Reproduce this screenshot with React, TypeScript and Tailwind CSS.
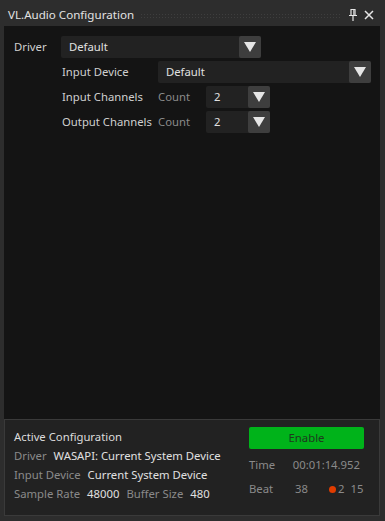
import React from 'react';

const font = { fontFamily: '"Noto Sans", "Open Sans", sans-serif' };

const Arrow = () => (
  <svg width="12" height="10" viewBox="0 0 12 10">
    <polygon points="0,0 12,0 6,10" fill="#e6e6e6" />
  </svg>
);

const Dropdown = ({ value, className }: { value: string; className: string }) => (
  <div className={`flex h-[22px] items-stretch rounded-[2px] bg-[#222222] ${className}`}>
    <span className="flex flex-1 items-center pl-2 text-[#e0e0e0]">{value}</span>
    <span className="flex w-[22px] items-center justify-center rounded-[2px] bg-[#3e3e3e]">
      <Arrow />
    </span>
  </div>
);

const App: React.FC = () => {
  return (
    <div
      className="flex h-[521px] w-[385px] flex-col bg-[#2d2d2d] text-[11.3px] text-[#cfcfcf]"
      style={font}
    >
      {/* title bar */}
      <div className="flex h-[26px] shrink-0 items-center pl-[8px] pr-[11px] pt-[4px]">
        <span className="text-[11.6px] text-[#e2e2e2]">VL.Audio Configuration</span>
        <div className="ml-[6px] mr-[8px] h-[5px] flex-1 bg-[radial-gradient(#3e3e3e_0.6px,transparent_0.8px)] bg-[length:3px_3px]" />
        <svg width="8" height="12" viewBox="0 0 8 12">
          <path d="M2 0.5h4v6H2z M0 6.5h8 M4 6.5v5.5" stroke="#e6e6e6" strokeWidth="1.2" fill="none" />
          <path d="M4.8 1v5" stroke="#e6e6e6" strokeWidth="1" />
        </svg>
        <svg width="10" height="10" viewBox="0 0 10 10" className="ml-[7px]">
          <path d="M1 1L9 9M9 1L1 9" stroke="#e6e6e6" strokeWidth="1.5" />
        </svg>
      </div>

      <div className="mb-[5px] ml-[4px] mr-[5px] flex flex-1 flex-col">
        {/* config */}
        <div className="flex flex-1 flex-col gap-[3px] bg-[#141414] pl-[10px] pt-[10px]">
          <div className="flex items-center">
            <span className="w-[47px]">Driver</span>
            <Dropdown value="Default" className="w-[200px]" />
          </div>
          <div className="flex items-center pl-[48px]">
            <span className="w-[96px]">Input Device</span>
            <Dropdown value="Default" className="w-[213px]" />
          </div>
          <div className="flex items-center pl-[48px]">
            <span className="w-[96px]">Input Channels</span>
            <span className="w-[48px] text-[#8a8a8a]">Count</span>
            <Dropdown value="2" className="w-[64px]" />
          </div>
          <div className="flex items-center pl-[48px]">
            <span className="w-[96px]">Output Channels</span>
            <span className="w-[48px] text-[#8a8a8a]">Count</span>
            <Dropdown value="2" className="w-[64px]" />
          </div>
        </div>

        {/* active configuration */}
        <div className="flex h-[97px] shrink-0 border border-[#3a3a3a] bg-[#222222] pl-[9px] pr-[15px] pt-[7px]">
          <div className="flex flex-1 flex-col leading-[19px]">
            <span className="text-[#dcdcdc]">Active Configuration</span>
            <div>
              <span className="text-[#8a8a8a]">Driver</span>
              <span className="ml-[7px] text-[#e0e0e0]">WASAPI: Current System Device</span>
            </div>
            <div>
              <span className="text-[#8a8a8a]">Input Device</span>
              <span className="ml-[7px] text-[#e0e0e0]">Current System Device</span>
            </div>
            <div>
              <span className="text-[#8a8a8a]">Sample Rate</span>
              <span className="ml-[7px] text-[#e0e0e0]">48000</span>
              <span className="ml-[7px] text-[#8a8a8a]">Buffer Size</span>
              <span className="ml-[7px] text-[#e0e0e0]">480</span>
            </div>
          </div>
          <div className="flex w-[115px] flex-col">
            <div className="flex h-[22px] items-center justify-center rounded-[2px] bg-[#00b31a] text-[#1e3a1e]">
              Enable
            </div>
            <div className="mt-[4px] flex h-[24px] items-center pr-[4px] text-[#8a8a8a]">
              <span className="w-[48px]">Time</span>
              <span className="flex-1 text-right">00:01:14.952</span>
            </div>
            <div className="flex h-[24px] items-center text-[#8a8a8a]">
              <span className="w-[46px]">Beat</span>
              <span className="w-[34px]">38</span>
              <span className="mr-[2px] h-[7px] w-[7px] rounded-full bg-[#e03c00]" />
              <span>2</span>
              <span className="ml-[6px]">15</span>
            </div>
          </div>
        </div>
      </div>
    </div>
  );
};

export default App;
